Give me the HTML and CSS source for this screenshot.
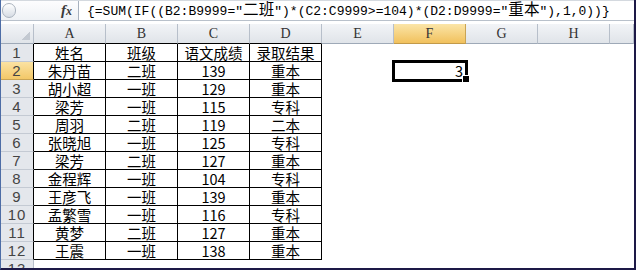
FILE: index.html
```html
<!DOCTYPE html>
<html lang="zh-CN">
<head>
    <meta charset="UTF-8">
    <title>Sheet1</title>
    <link rel="stylesheet" href="styles.css">
</head>
<body>
    <div class="window">
        <div class="formula-bar">
            <div class="fx-area">
                <span class="grip"></span>
                <span class="fx">f<small>x</small></span>
            </div>
            <div class="formula">{=SUM(IF((B2:B9999="<span class="cjk">二班</span>")*(C2:C9999&gt;=104)*(D2:D9999="<span class="cjk">重本</span>"),1,0))}</div>
        </div>
        <div class="gap"></div>

        <div class="sheet">
            <!-- column headers -->
            <div class="h corner"></div>
            <div class="h">A</div>
            <div class="h">B</div>
            <div class="h">C</div>
            <div class="h">D</div>
            <div class="h">E</div>
            <div class="h sel">F</div>
            <div class="h">G</div>
            <div class="h">H</div>
            <div class="h"></div>

            <div class="rh">1</div>
            <div class="d">姓名</div><div class="d">班级</div><div class="d">语文成绩</div><div class="d">录取结果</div>
            <div class="rest"></div>

            <div class="rh sel">2</div>
            <div class="d">朱丹苗</div><div class="d">二班</div><div class="d">139</div><div class="d">重本</div>
            <div class="e"></div>
            <div class="e active">3<span class="handle"></span></div>
            <div class="rest after-f"></div>

            <div class="rh">3</div>
            <div class="d">胡小超</div><div class="d">一班</div><div class="d">129</div><div class="d">重本</div>
            <div class="rest"></div>

            <div class="rh">4</div>
            <div class="d">梁芳</div><div class="d">一班</div><div class="d">115</div><div class="d">专科</div>
            <div class="rest"></div>

            <div class="rh">5</div>
            <div class="d">周羽</div><div class="d">二班</div><div class="d">119</div><div class="d">二本</div>
            <div class="rest"></div>

            <div class="rh">6</div>
            <div class="d">张晓旭</div><div class="d">一班</div><div class="d">125</div><div class="d">专科</div>
            <div class="rest"></div>

            <div class="rh">7</div>
            <div class="d">梁芳</div><div class="d">二班</div><div class="d">127</div><div class="d">重本</div>
            <div class="rest"></div>

            <div class="rh">8</div>
            <div class="d">金程辉</div><div class="d">一班</div><div class="d">104</div><div class="d">专科</div>
            <div class="rest"></div>

            <div class="rh">9</div>
            <div class="d">王彦飞</div><div class="d">一班</div><div class="d">139</div><div class="d">重本</div>
            <div class="rest"></div>

            <div class="rh">10</div>
            <div class="d">孟繁雪</div><div class="d">一班</div><div class="d">116</div><div class="d">专科</div>
            <div class="rest"></div>

            <div class="rh">11</div>
            <div class="d">黄梦</div><div class="d">二班</div><div class="d">127</div><div class="d">重本</div>
            <div class="rest"></div>

            <div class="rh">12</div>
            <div class="d">王震</div><div class="d">一班</div><div class="d">138</div><div class="d">重本</div>
            <div class="rest"></div>

            <div class="rh last">13</div>
            <div class="rest full"></div>
        </div>
    </div>
</body>
</html>
```

FILE: styles.css
```css
* {
    box-sizing: border-box;
}

body {
    margin: 0;
    background: #ffffff;
}

/* Window frame */
.window {
    width: 636px;
    height: 270px;
    overflow: hidden;
    border-left: 1px solid #4d6da6;
    border-right: 2px solid #1d1947;
    border-bottom: 2px solid #1d1947;
    font-family: "Noto Sans CJK SC", sans-serif;
    color: #000;
}

/* Formula bar */
.formula-bar {
    display: flex;
    height: 21px;
    border-top: 1px solid #d4d9df;
    border-bottom: 1px solid #b9c1cb;
}

.fx-area {
    width: 78px;
    display: flex;
    align-items: center;
    background: linear-gradient(#fdfdfe, #eef1f5);
    border-right: 1px solid #a7b1be;
}

.grip {
    width: 14px;
    height: 15px;
    margin-left: 1px;
    border: 1px solid #aab3be;
    border-radius: 8px;
    background: linear-gradient(#ffffff, #d6dce4);
}

.fx {
    margin-left: auto;
    margin-right: 6px;
    font-family: "Liberation Serif", serif;
    font-style: italic;
    font-weight: bold;
    font-size: 15px;
    color: #3a3a3a;
}

.fx small {
    font-size: 12px;
}

.formula {
    flex: 1;
    padding-left: 8px;
    font-family: "Liberation Mono", monospace;
    font-size: 13px;
    line-height: 19px;
    white-space: nowrap;
}

.formula .cjk {
    font-family: "Noto Sans CJK SC", sans-serif;
    font-size: 15.6px;
    line-height: 15px;
}

.gap {
    height: 3px;
}

/* Grid */
.sheet {
    display: grid;
    grid-template-columns: 33px repeat(8, 72px) 1fr;
    grid-template-rows: 20px repeat(12, 18px) 1fr;
    height: 244px;
}

.sheet > div {
    white-space: nowrap;
}

.h {
    background: linear-gradient(#f2f4f7, #e0e4e9);
    border-right: 1px solid #b7bfca;
    border-bottom: 1px solid #9ea9b7;
    font-family: "Liberation Serif", serif;
    font-size: 14px;
    line-height: 19px;
    text-align: center;
    color: #333;
}

.h:nth-child(2), .h:nth-child(3), .h:nth-child(4), .h:nth-child(5) {
    border-bottom-color: #000;
}

.h.corner {
    background:
        linear-gradient(to bottom right, transparent 50%, #c3c9d1 50%) no-repeat right 3px bottom 3px / 9px 9px,
        linear-gradient(#f2f4f7, #e0e4e9);
}

.h.sel {
    background: linear-gradient(#fbe5a8, #f1c15d);
    border-right-color: #c9a455;
    border-bottom-color: #c29a4a;
}

.rh {
    background: #e4e7ec;
    border-right: 1px solid #000;
    border-bottom: 1px solid #c4cad3;
    font-family: "Liberation Sans", sans-serif;
    font-size: 15px;
    letter-spacing: 1px;
    line-height: 17px;
    text-align: center;
    color: #444;
}

.rh.sel {
    background: linear-gradient(#fbe2a2, #f3c868);
    border-bottom-color: #c9a455;
}

.rh.last {
    border-right-color: #b7bfca;
    border-bottom: none;
    overflow: hidden;
}

.d {
    border-right: 1px solid #000;
    border-bottom: 1px solid #000;
    font-size: 14.5px;
    line-height: 17px;
    text-align: center;
}

.rest {
    grid-column: 6 / -1;
}

.rest.after-f {
    grid-column: 8 / -1;
}

.rest.full {
    grid-column: 2 / -1;
}

/* Active cell F2 */
.active {
    position: relative;
    font-size: 14.5px;
    line-height: 17px;
    text-align: right;
    padding-right: 3px;
}

.active::before {
    content: "";
    position: absolute;
    top: -2px;
    left: -2px;
    right: -2px;
    bottom: -2px;
    border: 3px solid #000;
}

.active .handle {
    position: absolute;
    right: -3px;
    bottom: -2px;
    width: 7px;
    height: 7px;
    background: #000;
    border-left: 1px solid #fff;
    border-top: 1px solid #fff;
}
```
